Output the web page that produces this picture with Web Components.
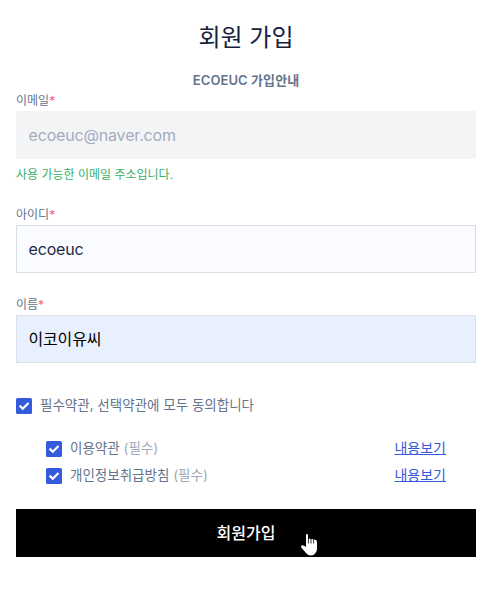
<!DOCTYPE html>
<html lang="ko">
<head>
<meta charset="UTF-8">
<title>회원 가입</title>
<style>
  body {
    margin: 0;
    background: #fff;
    color: #64748b;
    font-family: Inter, "Noto Sans CJK KR", sans-serif;
  }
</style>
</head>
<body>
<signup-page>
  <span slot="title">회원 가입</span>
  <span slot="guide">ECOEUC 가입안내</span>
  <form-field label="이메일" value="ecoeuc@naver.com" state="disabled" message="사용 가능한 이메일 주소입니다."></form-field>
  <form-field label="아이디" value="ecoeuc"></form-field>
  <form-field label="이름" value="이코이유씨" state="autofill"></form-field>
  <terms-list slot="terms">
    <check-item slot="all">필수약관, 선택약관에 모두 동의합니다</check-item>
    <check-item note="(필수)" link="내용보기">이용약관</check-item>
    <check-item note="(필수)" link="내용보기">개인정보취급방침</check-item>
  </terms-list>
  <submit-button slot="action">회원가입</submit-button>
</signup-page>

<script>
class SignupPage extends HTMLElement {
  constructor() {
    super();
    this.attachShadow({ mode: 'open' });
  }

  connectedCallback() {
    this.shadowRoot.innerHTML = `
      <style>
      :host {
        display: block;
        box-sizing: border-box;
        width: 491px;
        height: 589px;
        padding: 22px 15px 0 16px;
      }
      h1 {
        margin: 0;
        color: #16213f;
        font-size: 24px;
        font-weight: 400;
        line-height: 32px;
        text-align: center;
      }
      h2 {
        margin: 16px 0 0;
        font-size: 13px;
        font-weight: 600;
        letter-spacing: 0.08px;
        line-height: 20px;
        text-align: center;
      }
      .fields {
        display: flex;
        flex-direction: column;
      }
      </style>
      <h1><slot name="title"></slot></h1>
      <h2><slot name="guide"></slot></h2>
      <div class="fields"><slot></slot></div>
      <slot name="terms"></slot>
      <slot name="action"></slot>
    `;
  }
}

class FormField extends HTMLElement {
  constructor() {
    super();
    this.attachShadow({ mode: 'open' });
  }

  connectedCallback() {
    const message = this.getAttribute('message');

    this.shadowRoot.innerHTML = `
      <style>
      :host {
        display: block;
        margin-bottom: 21px;
      }
      .label {
        padding-top: 1px;
        font-size: 12px;
        line-height: 20px;
      }
      .label span {
        color: #fb5a76;
      }
      .box {
        display: flex;
        align-items: center;
        box-sizing: border-box;
        height: 48px;
        padding: 0 11.5px;
        border: 1px solid #dddfe7;
        background: #fafbfe;
        color: #1e2a4a;
        font-size: 16px;
        letter-spacing: -0.17px;
        line-height: 24px;
      }
      :host([state="disabled"]) .box {
        border-color: #f3f4f6;
        background: #f3f4f6;
        color: #a3adbf;
      }
      :host([state="autofill"]) .box {
        background: #e8f0fe;
        color: #000;
      }
      .message {
        padding-top: 7px;
        color: #36b06c;
        font-size: 12px;
        line-height: 17px;
      }
      </style>
      <div class="label">${this.getAttribute('label')}<span>*</span></div>
      <div class="box">${this.getAttribute('value')}</div>
      ${message ? `<div class="message">${message}</div>` : ''}
    `;
  }
}

class TermsList extends HTMLElement {
  constructor() {
    super();
    this.attachShadow({ mode: 'open' });
  }

  connectedCallback() {
    this.shadowRoot.innerHTML = `
      <style>
      :host {
        display: block;
        padding-top: 10px;
      }
      .items {
        display: flex;
        flex-direction: column;
        gap: 3px;
        padding: 19px 30px 0;
      }
      </style>
      <slot name="all"></slot>
      <div class="items"><slot></slot></div>
    `;
  }
}

class CheckItem extends HTMLElement {
  constructor() {
    super();
    this.attachShadow({ mode: 'open' });
  }

  connectedCallback() {
    const note = this.getAttribute('note');
    const link = this.getAttribute('link');

    this.shadowRoot.innerHTML = `
      <style>
      :host {
        display: flex;
        align-items: center;
        height: 24px;
        font-size: 13.5px;
        line-height: 24px;
      }
      svg {
        flex: none;
        width: 16px;
        height: 16px;
        margin-right: 8px;
      }
      .text {
        flex: 1;
        margin-top: -2px;
      }
      .note {
        color: #a0a8b8;
      }
      a {
        margin-top: -2px;
        color: #3459db;
        font-size: 14px;
        text-decoration: underline;
      }
      </style>
      <svg viewBox="0 0 16 16">
        <rect width="16" height="16" rx="1.5" fill="#345bdb"/>
        <path d="M3.6 7.6l3.2 3.2L12.5 5" fill="none" stroke="#fff" stroke-width="2.2"/>
      </svg>
      <span class="text"><slot></slot>${note ? ` <span class="note">${note}</span>` : ''}</span>
      ${link ? `<a href="#">${link}</a>` : ''}
    `;
  }
}

class SubmitButton extends HTMLElement {
  constructor() {
    super();
    this.attachShadow({ mode: 'open' });
  }

  connectedCallback() {
    this.shadowRoot.innerHTML = `
      <style>
      :host {
        display: block;
        position: relative;
        margin-top: 21px;
      }
      button {
        display: block;
        width: 100%;
        height: 48px;
        padding: 0;
        border: 0;
        background: #000;
        color: #fff;
        font: 500 16px/24px Inter, "Noto Sans CJK KR", sans-serif;
      }
      .pointer {
        position: absolute;
        left: 284px;
        top: 24px;
        width: 18px;
        height: 24px;
      }
      </style>
      <button type="button"><slot></slot></button>
      <svg class="pointer" viewBox="0 0 18 24">
        <path d="M6 2.2Q6 1 7 1T8 2.2V6Q8.2 5.5 9.3 5.6T10.6 6.2Q11 5.9 12 6T13.3 6.8Q13.6 6.4 14.6 6.6Q17 7 17 9V16Q17 18 15.5 20Q14 22.5 11 22.5Q8 22.5 6.5 20.5L1.2 14.5Q.6 12.5 2 12.2Q4 12 6 14Z" fill="#fff"/>
        <path d="M8.4 5V10.5M11 6V10.5M13.7 6.5V10.5" stroke="#000" stroke-width=".8"/>
      </svg>
    `;
  }
}

customElements.define('signup-page', SignupPage);
customElements.define('form-field', FormField);
customElements.define('terms-list', TermsList);
customElements.define('check-item', CheckItem);
customElements.define('submit-button', SubmitButton);
</script>
</body>
</html>
